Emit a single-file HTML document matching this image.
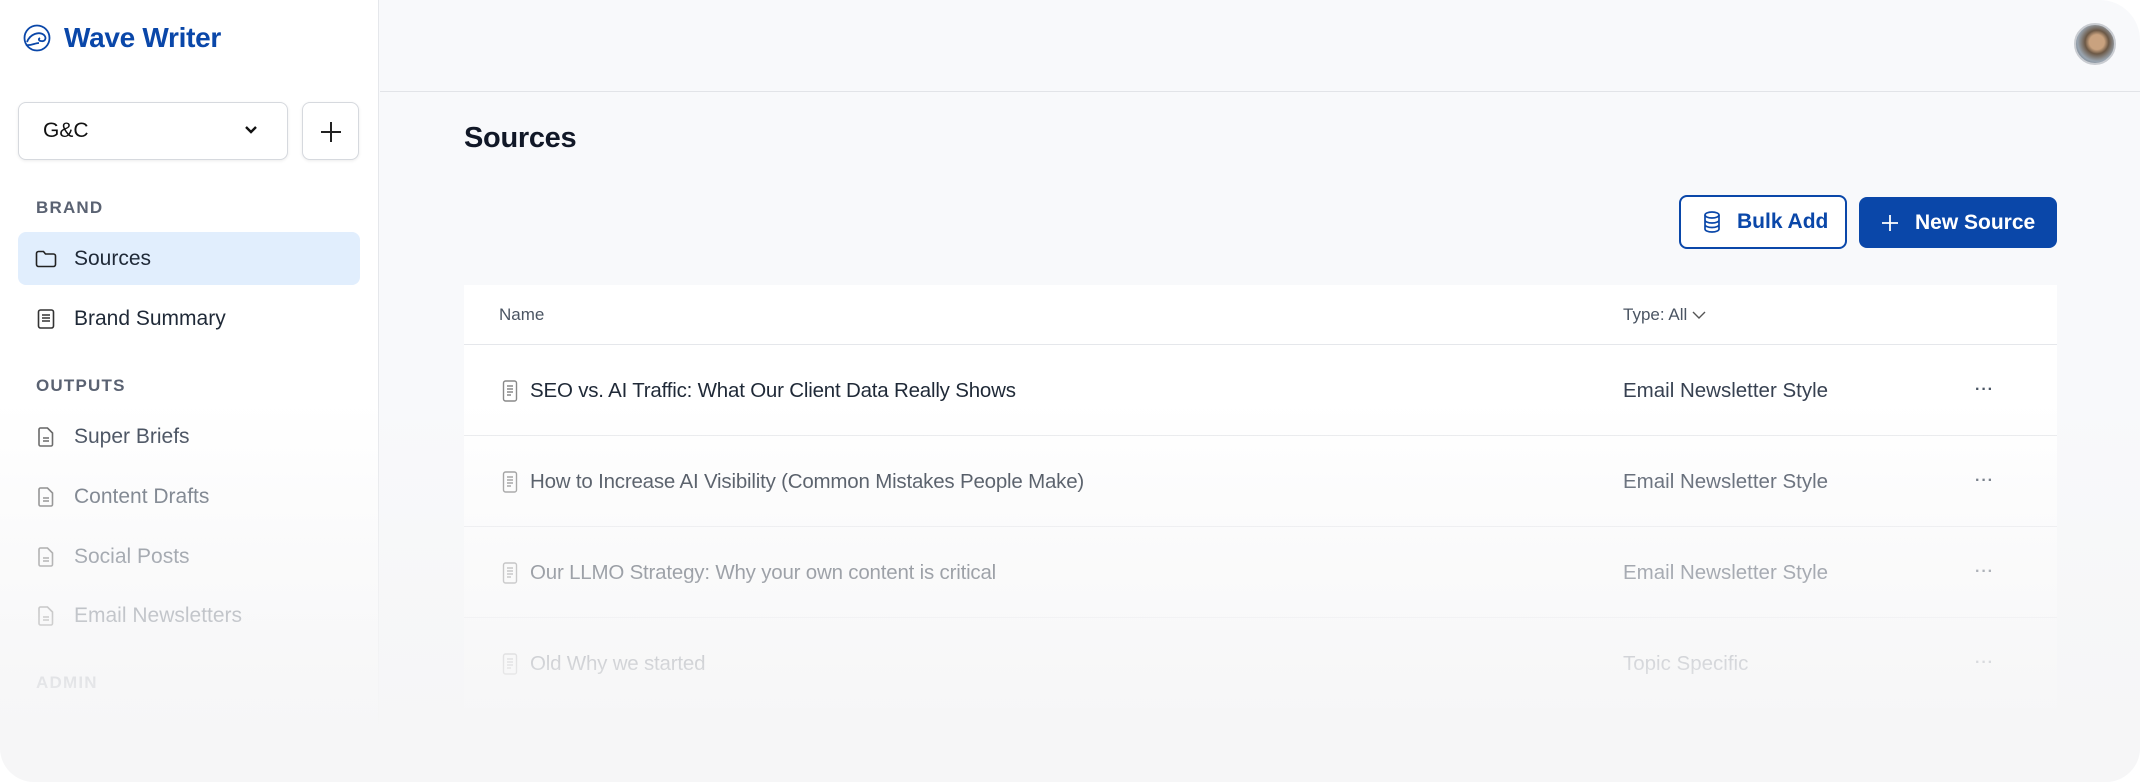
<!DOCTYPE html>
<html><head><meta charset="utf-8"><style>
*{box-sizing:border-box;margin:0;padding:0}
html,body{width:2140px;height:782px;background:#fff;overflow:hidden;font-family:"Liberation Sans",sans-serif}
.app{position:absolute;left:0;top:0;width:2140px;height:782px;background:#f8f9fb;border-radius:0 40px 34px 34px;overflow:hidden}
.side{position:absolute;left:0;top:0;width:379px;height:782px;background:#fff;border-right:1.5px solid #e5e7eb}
.logo{position:absolute;left:22px;top:22px;display:flex;align-items:center;color:#0a47a9;font-weight:bold;font-size:28px;letter-spacing:-0.3px}
.logo svg{margin-right:12px}
.sel{position:absolute;left:18px;top:102px;width:270px;height:58px;border:1.5px solid #d6d9de;border-radius:8px;box-shadow:0 1px 3px rgba(0,0,0,.08);background:#fff;font-size:21px;color:#111;padding:0 0 0 24px;line-height:56px}
.sel svg{position:absolute;right:28px;top:21px}
.plus{position:absolute;left:302px;top:102px;width:57px;height:58px;border:1.5px solid #d6d9de;border-radius:8px;box-shadow:0 1px 3px rgba(0,0,0,.08);background:#fff}
.plus svg{position:absolute;left:17px;top:18px}
.lbl{position:absolute;left:36px;font-size:17px;font-weight:bold;color:#5a6272;letter-spacing:1.2px}
.item{position:absolute;left:18px;width:342px;height:53px;border-radius:8px;display:flex;align-items:center;padding-left:17px;font-size:21px;color:#1f2937}
.item svg{margin-right:17px}
.item.act{background:#e1eefd}
.top{position:absolute;left:380px;top:0;right:0;height:92px;border-bottom:1.5px solid #e2e4e8}
.av{position:absolute;left:2074px;top:23px;width:42px;height:42px;border-radius:50%;border:2px solid #c9ccd1;background:radial-gradient(circle at 55% 45%,#c9a27f 0 25%,#6b5846 40%,#9aa5b0 65%,#4b5563 100%)}
h1{position:absolute;left:464px;top:122px;font-size:29px;font-weight:bold;color:#111827;letter-spacing:-0.3px}
.bulk{position:absolute;left:1679px;top:195px;width:168px;height:54px;border:2px solid #0a47a9;border-radius:8px;background:#fff;color:#0a47a9;font-size:21px;font-weight:bold;display:flex;align-items:center;padding-left:22px}
.bulk svg{margin-right:16px}
.new{position:absolute;left:1859px;top:197px;width:198px;height:51px;border-radius:8px;background:#0a47a9;color:#fff;font-size:21px;font-weight:bold;display:flex;align-items:center;padding-left:22px}
.new svg{margin-right:16px}
.tbl{position:absolute;left:464px;top:285px;width:1593px;height:423px;background:#fff}
.th{position:absolute;top:0;left:0;right:0;height:60px;border-bottom:1.5px solid #e5e7eb;font-size:17px;color:#4b5563}
.row{position:absolute;left:0;right:0;height:91px;border-bottom:1.5px solid #e9eaed;font-size:20.5px;color:#1f2937}
.row .n{position:absolute;left:38px;top:34px;display:flex;align-items:center;letter-spacing:-0.2px}
.row .n svg{margin-right:12px}
.row .t{position:absolute;left:1159px;top:34px;color:#374151}
.row .d{position:absolute;left:1511px;top:36px;color:#4b5563;font-size:16px;letter-spacing:1px;font-weight:bold}
.fade{position:absolute;left:0;top:0;width:2140px;height:782px;background:linear-gradient(to bottom,rgba(246,246,247,0) 0,rgba(246,246,247,0) 400px,rgba(246,246,247,.55) 560px,rgba(246,246,247,.88) 680px,rgba(246,246,247,1) 740px)}
</style></head><body>
<div class="app">
<div class="side">
 <div class="logo"><svg width="30" height="30" viewBox="0 0 30 30" fill="none" stroke="#0a47a9" stroke-width="1.8"><circle cx="15" cy="15" r="12.5"/><path d="M5 19c3-8 12-11 17-7 3 3 1 7-3 6-2 0-3-2-1-3"/><path d="M4 22c5 1 9-2 13-2"/></svg>Wave Writer</div>
 <div class="sel">G&amp;C<svg width="16" height="12" viewBox="0 0 16 12"><path d="M3 3l5 5 5-5" fill="none" stroke="#111" stroke-width="2.4"/></svg></div>
 <div class="plus"><svg width="22" height="22" viewBox="0 0 22 22"><path d="M11 1v20M1 11h20" stroke="#222" stroke-width="2"/></svg></div>
 <div class="lbl" style="top:198px">BRAND</div>
 <div class="item act" style="top:232px"><svg width="22" height="18" viewBox="0 0 22 18" fill="none" stroke="#222" stroke-width="1.6"><path d="M1.5 3.5a2 2 0 0 1 2-2h5l2 2.5h8a2 2 0 0 1 2 2v8.5a2 2 0 0 1-2 2h-15a2 2 0 0 1-2-2z"/></svg>Sources</div>
 <div class="item" style="top:292px"><svg width="22" height="20" viewBox="0 0 22 20" fill="none" stroke="#333" stroke-width="1.6"><rect x="3.5" y="1" width="15" height="18" rx="2"/><path d="M7 6h8M7 9h8M7 12h8"/></svg>Brand Summary</div>
 <div class="lbl" style="top:376px">OUTPUTS</div>
 <div class="item" style="top:410px;color:#374151"><svg width="22" height="20" viewBox="0 0 22 20" fill="none" stroke="#555" stroke-width="1.6"><path d="M4 2.5a1.5 1.5 0 0 1 1.5-1.5h7l5 5v11.5a1.5 1.5 0 0 1-1.5 1.5h-10.5a1.5 1.5 0 0 1-1.5-1.5z"/><path d="M8 11h6M8 14h6"/></svg>Super Briefs</div>
 <div class="item" style="top:470px;color:#4b5563"><svg width="22" height="20" viewBox="0 0 22 20" fill="none" stroke="#666" stroke-width="1.6"><path d="M4 2.5a1.5 1.5 0 0 1 1.5-1.5h7l5 5v11.5a1.5 1.5 0 0 1-1.5 1.5h-10.5a1.5 1.5 0 0 1-1.5-1.5z"/><path d="M8 11h6M8 14h6"/></svg>Content Drafts</div>
 <div class="item" style="top:530px;color:#4b5563"><svg width="22" height="20" viewBox="0 0 22 20" fill="none" stroke="#666" stroke-width="1.6"><path d="M4 2.5a1.5 1.5 0 0 1 1.5-1.5h7l5 5v11.5a1.5 1.5 0 0 1-1.5 1.5h-10.5a1.5 1.5 0 0 1-1.5-1.5z"/><path d="M8 11h6M8 14h6"/></svg>Social Posts</div>
 <div class="item" style="top:589px;color:#4b5563"><svg width="22" height="20" viewBox="0 0 22 20" fill="none" stroke="#666" stroke-width="1.6"><path d="M4 2.5a1.5 1.5 0 0 1 1.5-1.5h7l5 5v11.5a1.5 1.5 0 0 1-1.5 1.5h-10.5a1.5 1.5 0 0 1-1.5-1.5z"/><path d="M8 11h6M8 14h6"/></svg>Email Newsletters</div>
 <div class="lbl" style="top:673px">ADMIN</div>
</div>
<div class="top"></div>
<div class="av"></div>
<h1>Sources</h1>
<div class="bulk"><svg width="18" height="22" viewBox="0 0 18 22" fill="none" stroke="#0a47a9" stroke-width="1.7"><ellipse cx="9" cy="4" rx="7" ry="3"/><path d="M2 4v14c0 1.7 3 3 7 3s7-1.3 7-3V4M2 9c0 1.7 3 3 7 3s7-1.3 7-3M2 13.5c0 1.7 3 3 7 3s7-1.3 7-3"/></svg>Bulk Add</div>
<div class="new"><svg width="18" height="18" viewBox="0 0 18 18"><path d="M9 1v16M1 9h16" stroke="#fff" stroke-width="1.8"/></svg>New Source</div>
<div class="tbl">
 <div class="th"><span style="position:absolute;left:35px;top:20px">Name</span><span style="position:absolute;left:1159px;top:20px">Type: All <svg width="14" height="10" viewBox="0 0 14 10"><path d="M1 2l6 6 6-6" fill="none" stroke="#555" stroke-width="1.4"/></svg></span></div>
 <div class="row" style="top:60px"><div class="n"><svg width="16" height="22" viewBox="0 0 16 22" fill="none" stroke="#888" stroke-width="1.4"><rect x="1.5" y="1" width="13" height="20" rx="2"/><path d="M5 6h6M5 9h6M5 12h6M5 15h4"/></svg>SEO vs. AI Traffic: What Our Client Data Really Shows</div><div class="t">Email Newsletter Style</div><div class="d">···</div></div>
 <div class="row" style="top:151px"><div class="n"><svg width="16" height="22" viewBox="0 0 16 22" fill="none" stroke="#888" stroke-width="1.4"><rect x="1.5" y="1" width="13" height="20" rx="2"/><path d="M5 6h6M5 9h6M5 12h6M5 15h4"/></svg>How to Increase AI Visibility (Common Mistakes People Make)</div><div class="t">Email Newsletter Style</div><div class="d">···</div></div>
 <div class="row" style="top:242px"><div class="n"><svg width="16" height="22" viewBox="0 0 16 22" fill="none" stroke="#888" stroke-width="1.4"><rect x="1.5" y="1" width="13" height="20" rx="2"/><path d="M5 6h6M5 9h6M5 12h6M5 15h4"/></svg>Our LLMO Strategy: Why your own content is critical</div><div class="t">Email Newsletter Style</div><div class="d">···</div></div>
 <div class="row" style="top:333px;border:0"><div class="n"><svg width="16" height="22" viewBox="0 0 16 22" fill="none" stroke="#888" stroke-width="1.4"><rect x="1.5" y="1" width="13" height="20" rx="2"/><path d="M5 6h6M5 9h6M5 12h6M5 15h4"/></svg>Old Why we started</div><div class="t">Topic Specific</div><div class="d">···</div></div>
</div>
<div class="fade"></div>
</div>
</body></html>
